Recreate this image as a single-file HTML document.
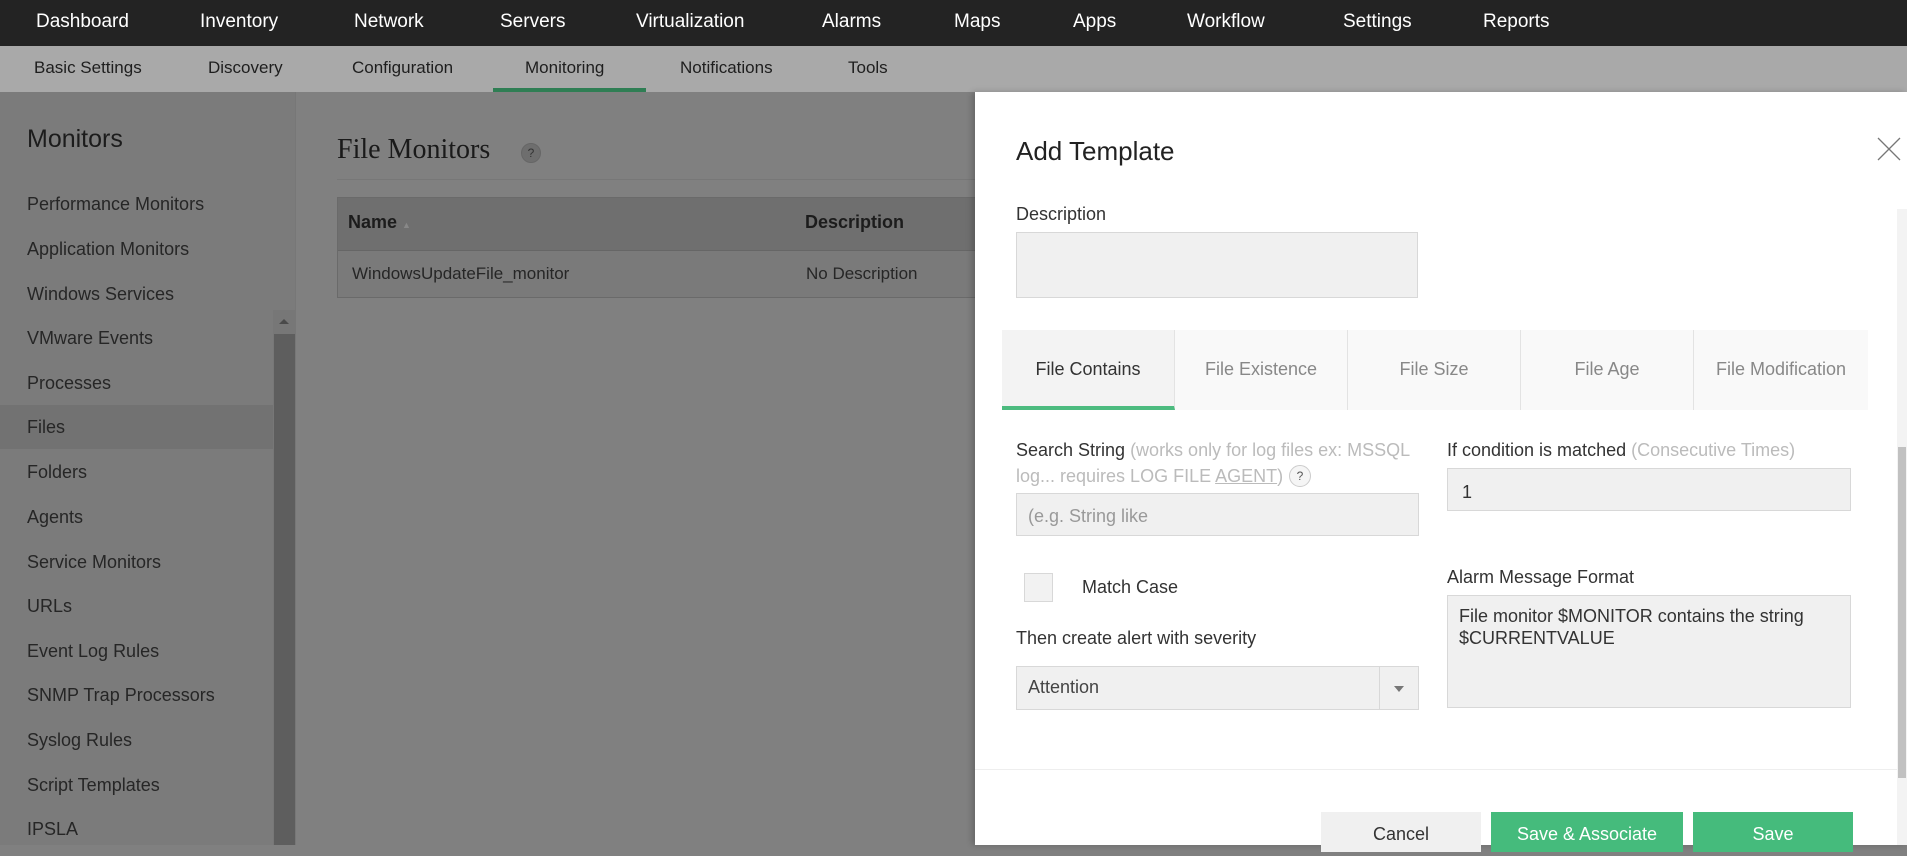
<!DOCTYPE html>
<html><head><meta charset="utf-8"><style>
*{box-sizing:border-box;margin:0;padding:0}
body{width:1907px;height:845px;overflow:hidden;position:relative;background:#808080;font-family:"Liberation Sans",sans-serif;}
.abs{position:absolute;white-space:nowrap}
.top{left:0;top:0;width:1907px;height:46px;background:#232323}
.top span{position:absolute;top:11px;color:#fff;font-size:19px}
.sub{left:0;top:46px;width:1907px;height:46px;background:#a9a9a9}
.sub span{position:absolute;top:12px;color:#1e1e1e;font-size:17px}
.side{left:0;top:92px;width:296px;height:753px;background:#7b7b7b;border-right:1px solid #777}
.side .it{position:absolute;left:27px;font-size:18px;color:#262626}
.m{color:#222}
.tab{position:absolute;top:330px;height:80px;width:173px;background:#f9f9f9;border-right:1px solid #e3e3e3;text-align:center;line-height:78px;font-size:18px;color:#888}
.lbl{font-size:18px;color:#333}
.inp{position:absolute;background:#f0f0f0;border:1px solid #d8d8d8}
.btn{position:absolute;top:812px;height:40px;text-align:center;line-height:44px;font-size:18px}
</style></head><body>
<div class="abs top">
<span style="left:36px">Dashboard</span><span style="left:200px">Inventory</span><span style="left:354px">Network</span><span style="left:500px">Servers</span><span style="left:636px">Virtualization</span><span style="left:822px">Alarms</span><span style="left:954px">Maps</span><span style="left:1073px">Apps</span><span style="left:1187px">Workflow</span><span style="left:1343px">Settings</span><span style="left:1483px">Reports</span>
</div>
<div class="abs sub">
<span style="left:34px">Basic Settings</span><span style="left:208px">Discovery</span><span style="left:352px">Configuration</span><span style="left:525px">Monitoring</span><span style="left:680px">Notifications</span><span style="left:848px">Tools</span>
<div style="position:absolute;left:493px;top:42px;width:153px;height:4px;background:#2f7e54"></div>
</div>
<div class="abs side">
<div class="it" style="top:33px;font-size:25px;color:#1c1c1c">Monitors</div>
<div style="position:absolute;left:0;top:313px;width:275px;height:44px;background:#727272"></div>
<div class="it" style="top:102px">Performance Monitors</div>
<div class="it" style="top:147px">Application Monitors</div>
<div class="it" style="top:192px">Windows Services</div>
<div class="it" style="top:236px">VMware Events</div>
<div class="it" style="top:281px">Processes</div>
<div class="it m" style="top:325px">Files</div>
<div class="it" style="top:370px">Folders</div>
<div class="it" style="top:415px">Agents</div>
<div class="it" style="top:460px">Service Monitors</div>
<div class="it" style="top:504px">URLs</div>
<div class="it" style="top:549px">Event Log Rules</div>
<div class="it" style="top:593px">SNMP Trap Processors</div>
<div class="it" style="top:638px">Syslog Rules</div>
<div class="it" style="top:683px">Script Templates</div>
<div class="it" style="top:727px">IPSLA</div>
<div style="position:absolute;left:273px;top:218px;width:22px;height:535px;background:#777"></div>
<div style="position:absolute;left:274px;top:242px;width:21px;height:511px;background:#5e5e5e"></div>
<div style="position:absolute;left:279px;top:227px;width:0;height:0;border-left:5px solid transparent;border-right:5px solid transparent;border-bottom:5px solid #4a4a4a"></div>
</div>
<div class="abs" style="left:337px;top:134px;font-family:'Liberation Serif',serif;font-size:28px;color:#1a1a1a">File Monitors</div>
<div class="abs" style="left:521px;top:143px;width:20px;height:20px;border-radius:50%;background:#6e6e6e;border:1px solid #666;font-size:12px;color:#333;text-align:center;line-height:18px">?</div>
<div class="abs" style="left:337px;top:179px;width:640px;height:1px;background:#777"></div>
<div class="abs" style="left:337px;top:197px;width:640px;height:101px;border:1px solid #6a6a6a;background:#7a7a7a"></div>
<div class="abs" style="left:338px;top:198px;width:640px;height:53px;background:#6f6f6f;border-bottom:1px solid #666"></div>
<div class="abs" style="left:348px;top:212px;font-size:18px;color:#1c1c1c;font-weight:bold">Name <span style="font-size:9px;color:#888">▲</span></div>
<div class="abs" style="left:805px;top:212px;font-size:18px;color:#1c1c1c;font-weight:bold">Description</div>
<div class="abs" style="left:352px;top:264px;font-size:17px;color:#262626">WindowsUpdateFile_monitor</div>
<div class="abs" style="left:806px;top:264px;font-size:17px;color:#262626">No Description</div>

<div class="abs" style="left:975px;top:92px;width:932px;height:753px;background:#fff;box-shadow:-3px 0 6px rgba(0,0,0,.2)">
</div>
<div class="abs" style="left:1016px;top:136px;font-size:26px;color:#222">Add Template</div>
<svg class="abs" style="left:1877px;top:137px" width="24" height="24"><path d="M1 1L23 23M23 1L1 23" stroke="#777" stroke-width="1.3"/></svg>
<div class="abs" style="left:1897px;top:209px;width:10px;height:636px;background:#f3f3f3"></div>
<div class="abs" style="left:1898px;top:447px;width:8px;height:331px;background:#c1c1c1"></div>
<div class="abs lbl" style="left:1016px;top:204px">Description</div>
<div class="inp" style="left:1016px;top:232px;width:402px;height:66px"></div>

<div class="tab" style="left:1002px;color:#333;border-bottom:4px solid #4cbb7f;background:#f3f3f3">File Contains</div>
<div class="tab" style="left:1175px">File Existence</div>
<div class="tab" style="left:1348px">File Size</div>
<div class="tab" style="left:1521px">File Age</div>
<div class="tab" style="left:1694px;border-right:none;width:174px">File Modification</div>

<div class="abs lbl" style="left:1016px;top:440px">Search String <span style="color:#bbb">(works only for log files ex: MSSQL</span></div>
<div class="abs lbl" style="left:1016px;top:466px;color:#bbb">log... requires LOG FILE <u>AGENT</u>)</div>
<div class="abs" style="left:1289px;top:465px;width:22px;height:22px;border-radius:50%;border:1px solid #ccc;background:#f5f5f5;font-size:12px;text-align:center;line-height:20px;color:#555">?</div>
<div class="inp" style="left:1016px;top:493px;width:403px;height:43px"></div>
<div class="abs" style="left:1028px;top:506px;font-size:18px;color:#999">(e.g. String like</div>

<div class="abs lbl" style="left:1447px;top:440px">If condition is matched <span style="color:#bbb">(Consecutive Times)</span></div>
<div class="inp" style="left:1447px;top:468px;width:404px;height:43px"></div>
<div class="abs" style="left:1462px;top:482px;font-size:18px;color:#333">1</div>

<div class="inp" style="left:1024px;top:573px;width:29px;height:29px;background:#f2f2f2"></div>
<div class="abs lbl" style="left:1082px;top:577px">Match Case</div>
<div class="abs lbl" style="left:1016px;top:628px">Then create alert with severity</div>
<div class="inp" style="left:1016px;top:666px;width:403px;height:44px"></div>
<div class="abs" style="left:1379px;top:667px;width:1px;height:42px;background:#d8d8d8"></div>
<div class="abs" style="left:1394px;top:686px;width:0;height:0;border-left:5px solid transparent;border-right:5px solid transparent;border-top:6px solid #777"></div>
<div class="abs" style="left:1028px;top:677px;font-size:18px;color:#444">Attention</div>

<div class="abs lbl" style="left:1447px;top:567px">Alarm Message Format</div>
<div class="inp" style="left:1447px;top:595px;width:404px;height:113px"></div>
<div class="abs" style="left:1459px;top:605px;font-size:18px;color:#333;line-height:22px">File monitor $MONITOR contains the string<br>$CURRENTVALUE</div>

<div class="abs" style="left:975px;top:769px;width:922px;height:1px;background:#eee"></div>
<div class="btn abs" style="left:1321px;width:160px;background:#f0f0f0;color:#333">Cancel</div>
<div class="btn abs" style="left:1491px;width:192px;background:#45bb7c;color:#fff">Save &amp; Associate</div>
<div class="btn abs" style="left:1693px;width:160px;background:#45bb7c;color:#fff">Save</div>
</body></html>
